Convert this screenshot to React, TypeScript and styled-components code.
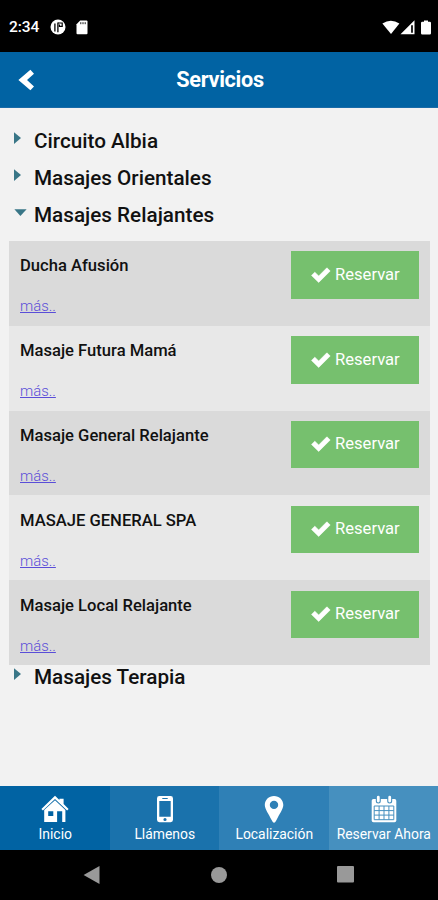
import React from 'react';
import styled, { createGlobalStyle } from 'styled-components';

const GlobalStyle = createGlobalStyle`
  * { box-sizing: border-box; }
  html, body, #root { height: 100%; }
  body { margin: 0; background: #000; font-family: Roboto, "Liberation Sans", sans-serif; }
`;

const Screen = styled.div`
  display: flex;
  flex-direction: column;
  width: 438px;
  height: 900px;
  overflow: hidden;
  background: #f2f2f2;
`;

const StatusBar = styled.div`
  display: flex;
  flex: none;
  align-items: center;
  height: 52px;
  padding: 2px 6px 0 9px;
  background: #000;
  color: #fff;
`;

const Clock = styled.span`
  width: 41px;
  font-size: 15.5px;
  font-weight: 500;
  line-height: 20px;
  letter-spacing: -0.1px;
`;

const StatusIcons = styled.div<{ $end?: boolean }>`
  display: flex;
  align-items: center;
  gap: ${(p) => (p.$end ? 0 : 10)}px;
  margin-left: ${(p) => (p.$end ? 'auto' : '0')};
  svg { display: block; }
`;

const Header = styled.header`
  display: grid;
  flex: none;
  grid-template-columns: 60px 1fr 60px;
  align-items: center;
  height: 56px;
  background: #0163a3;
  border-bottom: 1px solid #1a6ba8;
`;

const BackButton = styled.button`
  display: flex;
  padding: 0 0 0 18px;
  border: 0;
  background: none;
  cursor: pointer;
`;

const Title = styled.h1`
  margin: 0;
  padding-left: 2px;
  color: #fff;
  font-size: 21.7px;
  font-weight: 700;
  line-height: 26px;
  letter-spacing: -0.3px;
  text-align: center;
`;

const Content = styled.main`
  flex: 1;
  min-height: 0;
  padding: 21px 8px 0 9px;
`;

const Section = styled.h2`
  display: flex;
  height: 24px;
  margin: 0 0 13px;
  color: #111;
  font-size: 20.7px;
  font-weight: 500;
  line-height: 24px;
`;

const Marker = styled.span`
  flex: none;
  width: 25px;
  padding: 3px 0 0 5px;
  svg { display: block; }
`;

const ServiceList = styled.ul`
  margin: 14px 0 0;
  padding: 0;
  list-style: none;
`;

const ServiceRow = styled.li`
  display: flex;
  justify-content: space-between;
  height: 84.8px;
  padding: 10.4px 11px 0;
  background: #e8e8e8;
  &:nth-child(odd) { background: #dadada; }
`;

const ServiceName = styled.h3`
  margin: 5px 0 0;
  color: #111;
  font-size: 16.6px;
  font-weight: 500;
  line-height: 20px;
`;

const MoreLink = styled.a`
  display: block;
  margin-top: 21px;
  color: #5a4ed8;
  font-size: 14.9px;
  font-weight: 300;
  line-height: 18px;
  text-decoration: underline;
`;

const BookButton = styled.button`
  display: flex;
  align-items: center;
  gap: 4px;
  width: 128px;
  height: 47.5px;
  padding: 0 0 0.5px 20px;
  border: 0;
  background: #76c06e;
  color: #fff;
  font: 400 16.6px/20px Roboto, "Liberation Sans", sans-serif;
  cursor: pointer;
`;

const TabBar = styled.nav`
  display: grid;
  flex: none;
  grid-template-columns: repeat(4, 1fr);
  height: 63.5px;
`;

const Tab = styled.a<{ $tone: string }>`
  display: flex;
  flex-direction: column;
  align-items: center;
  padding: 9px 0 0 1px;
  background: ${(p) => p.$tone};
  color: #fff;
  font-size: 13.9px;
  line-height: 18px;
  white-space: nowrap;
  svg { display: block; margin-bottom: 2px; }
`;

const SystemBar = styled.div`
  display: flex;
  flex: none;
  align-items: center;
  justify-content: space-between;
  height: 50.5px;
  padding: 0 84px 0 83px;
  background: #000;
`;

const RightArrow = () => (
  <svg width="9" height="13" viewBox="0 0 9 13"><path d="M0 0.3 7 6.1 0 12z" fill="#397687" /></svg>
);

const DownArrow = () => (
  <svg width="14" height="15" viewBox="0 0 14 15"><path d="M0.4 3.2H12.6L6.4 10.1z" fill="#397687" /></svg>
);

const Check = () => (
  <svg width="20" height="16" viewBox="0 0 20 16">
    <path d="M3.8 5.2 7.7 9 15.9 .8 19.2 4 7.7 15.4 .5 8.4z" fill="#fff" stroke="#fff" strokeWidth=".6" strokeLinejoin="round" />
  </svg>
);

const House = () => (
  <svg width="28" height="28" viewBox="0 0 28 28" fill="#fff">
    <path d="M14 .8 18.4 5V3.8H22.6V9L27.6 14.1 26.1 15.5 14 4.1 1.9 15.5.4 14.1z" />
    <path fillRule="evenodd" d="M14 5.2 24.4 15V27H21.2V16.2H16.1V27H3.2V15zM7.2 16.2V20.9H12.3V16.2z" />
  </svg>
);

const Phone = () => (
  <svg width="28" height="28" viewBox="0 0 28 28">
    <path fill="#fff" fillRule="evenodd" d="M8.4 1H19.6Q22 1 22 3.4V24.8Q22 27.2 19.6 27.2H8.4Q6 27.2 6 24.8V3.4Q6 1 8.4 1zM8.3 6V21.7H19.7V6zM11.3 3V4H16.7V3zM14 22.9A1.6 1.6 0 1 0 14 26.1 1.6 1.6 0 1 0 14 22.9z" />
  </svg>
);

const Pin = () => (
  <svg width="28" height="28" viewBox="0 0 28 28">
    <path fill="#fff" fillRule="evenodd" d="M14 .9C19.3.9 23.3 4.8 23.3 10 23.3 14.1 19.2 19.4 16.5 25L15.3 27Q14 28.4 12.8 27L11.6 25C8.9 19.4 4.8 14.1 4.8 10 4.8 4.8 8.8.9 14 .9zM14 5.7A4.2 4.2 0 1 0 14 14.1 4.2 4.2 0 1 0 14 5.7z" />
  </svg>
);

const Calendar = () => (
  <svg width="28" height="28" viewBox="0 0 28 28">
    <rect x="1.7" y="4" width="24.6" height="23.2" rx="1.8" fill="#fff" />
    <path d="M8.3 2.4V6M19.7 2.4V6" stroke="#4690bf" strokeWidth="5" strokeLinecap="round" />
    <path d="M8.3 2.2V6M19.7 2.2V6" stroke="#fff" strokeWidth="2.8" strokeLinecap="round" />
    <path d="M4.2 11H23.8V24.7H4.2zM4.2 15.6H23.8M4.2 20.1H23.8M9.1 11V24.7M14 11V24.7M18.9 11V24.7" fill="none" stroke="#4690bf" strokeWidth="1" />
  </svg>
);

const services = [
  'Ducha Afusión',
  'Masaje Futura Mamá',
  'Masaje General Relajante',
  'MASAJE GENERAL SPA',
  'Masaje Local Relajante',
];

const tabs = [
  { label: 'Inicio', tone: '#0163a3', icon: <House /> },
  { label: 'Llámenos', tone: '#1a72ac', icon: <Phone /> },
  { label: 'Localización', tone: '#2f80b6', icon: <Pin /> },
  { label: 'Reservar Ahora', tone: '#4690bf', icon: <Calendar /> },
];

export default function App() {
  return (
    <Screen>
      <GlobalStyle />
      <StatusBar>
        <Clock>2:34</Clock>
        <StatusIcons>
          <svg width="16" height="16" viewBox="0 0 16 16">
            <circle cx="8" cy="8" r="7.5" fill="#fff" />
            <path d="M4.9 12.6V4.4" stroke="#000" strokeWidth="1.3" />
            <path d="M7.9 13.3V3.6" stroke="#000" strokeWidth="1.3" />
            <path d="M8 4H12.2V7.4H9.4V5.5" fill="none" stroke="#000" strokeWidth="1.2" />
          </svg>
          <svg width="12" height="15" viewBox="0 0 12 15">
            <path d="M4.2.5H10.5Q11.5.5 11.5 1.5V13.2Q11.5 14.2 10.5 14.2H1.5Q.5 14.2.5 13.2V4.3z" fill="#fff" />
            <path d="M4.8 2.2V4.2M7 2.2V4.2M9.2 2.2V4.2" stroke="#000" strokeWidth=".9" />
          </svg>
        </StatusIcons>
        <StatusIcons $end>
          <svg width="18" height="15" viewBox="0 0 18 15"><path d="M.4 3.6Q8.8-2.2 17.4 3.6L9 13.9z" fill="#fff" /></svg>
          <svg width="20" height="15" viewBox="0 0 20 15">
            <path d="M.5 14.2 14.5.3V14.2z" fill="#fff" />
            <path d="M12 5.2V12.8" stroke="#000" strokeWidth="1.7" />
          </svg>
          <svg width="12" height="15" viewBox="0 0 12 15"><path d="M4 .4H8V1.7H9.8Q11 1.7 11 2.9V13.2Q11 14.4 9.8 14.4H2.2Q1 14.4 1 13.2V2.9Q1 1.7 2.2 1.7H4z" fill="#fff" /></svg>
        </StatusIcons>
      </StatusBar>
      <Header>
        <BackButton aria-label="Atrás">
          <svg width="17" height="22" viewBox="0 0 17 22"><path d="M.4 11 12.4.7 16 4.8 9 11 16 17.4 12.4 21.3z" fill="#fff" /></svg>
        </BackButton>
        <Title>Servicios</Title>
      </Header>
      <Content>
        <Section><Marker><RightArrow /></Marker>Circuito Albia</Section>
        <Section><Marker><RightArrow /></Marker>Masajes Orientales</Section>
        <Section><Marker><DownArrow /></Marker>Masajes Relajantes</Section>
        <ServiceList>
          {services.map((name) => (
            <ServiceRow key={name}>
              <div>
                <ServiceName>{name}</ServiceName>
                <MoreLink>más..</MoreLink>
              </div>
              <BookButton><Check />Reservar</BookButton>
            </ServiceRow>
          ))}
        </ServiceList>
        <Section><Marker><RightArrow /></Marker>Masajes Terapia</Section>
      </Content>
      <TabBar>
        {tabs.map((tab) => (
          <Tab key={tab.label} $tone={tab.tone}>{tab.icon}{tab.label}</Tab>
        ))}
      </TabBar>
      <SystemBar>
        <svg width="17" height="20" viewBox="0 0 17 20"><path d="M.6 10 16.5 1V19z" fill="#999" /></svg>
        <svg width="17" height="18" viewBox="0 0 17 18"><circle cx="9" cy="9" r="8" fill="#999" /></svg>
        <svg width="17" height="17" viewBox="0 0 17 17"><rect width="17" height="16.5" rx="1" fill="#999" /></svg>
      </SystemBar>
    </Screen>
  );
}
